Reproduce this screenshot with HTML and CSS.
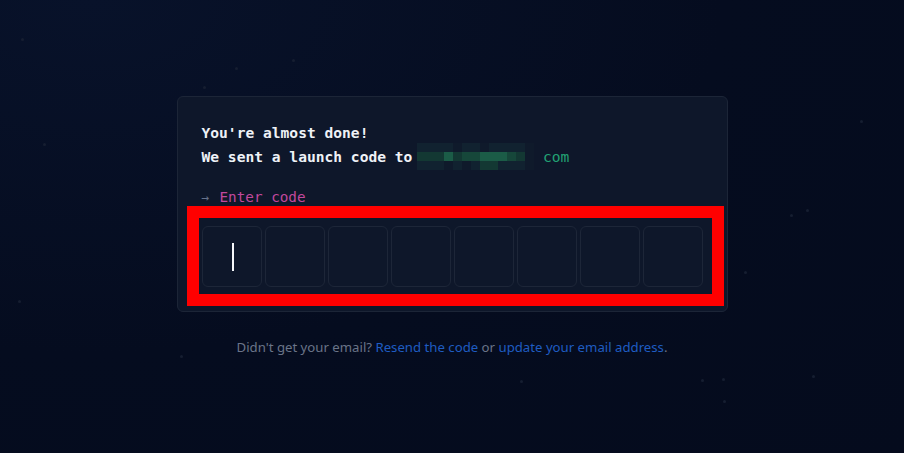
FILE: index.html
```html
<!DOCTYPE html>
<html lang="en">
<head>
<meta charset="utf-8">
<title>Launch code</title>
<link rel="stylesheet" href="styles.css">
</head>
<body>
<div class="stars">
  <span class="star" style="left:21px;top:38px"></span>
  <span class="star" style="left:292px;top:59px"></span>
  <span class="star" style="left:203px;top:86px"></span>
  <span class="star" style="left:235px;top:67px"></span>
  <span class="star" style="left:43px;top:143px"></span>
  <span class="star" style="left:790px;top:214px"></span>
  <span class="star" style="left:806px;top:209px"></span>
  <span class="star" style="left:744px;top:271px"></span>
  <span class="star" style="left:812px;top:375px"></span>
  <span class="star" style="left:722px;top:378px"></span>
  <span class="star" style="left:701px;top:379px"></span>
  <span class="star" style="left:723px;top:400px"></span>
  <span class="star" style="left:18px;top:300px"></span>
  <span class="star" style="left:180px;top:355px"></span>
  <span class="star" style="left:520px;top:380px"></span>
  <span class="star" style="left:860px;top:120px"></span>
</div>
<main class="page">
  <section class="card">
    <p class="line">You're almost done!</p>
    <p class="line">We sent a launch code to <span class="blur"><span class="grid"><span class="row"><i class="b1"></i><i class="b1"></i><i class="b1"></i><i class="b1"></i><i class="b0"></i><i class="b1"></i><i class="b1"></i><i class="b0"></i><i class="b1"></i><i class="b1"></i><i class="b1"></i><i class="b1"></i><i class="b0"></i></span><span class="row"><i class="b2"></i><i class="b2"></i><i class="b2"></i><i class="b4"></i><i class="b2"></i><i class="b3"></i><i class="b3"></i><i class="b4"></i><i class="b4"></i><i class="b4"></i><i class="b3"></i><i class="b2"></i><i class="b0"></i></span><span class="row"><i class="b1"></i><i class="b1"></i><i class="b1"></i><i class="b0"></i><i class="b1"></i><i class="b0"></i><i class="b1"></i><i class="b2"></i><i class="b2"></i><i class="b1"></i><i class="b1"></i><i class="b1"></i><i class="b0"></i></span></span></span> <span class="dom">com</span></p>
    <p class="prompt"><span class="arrow">→</span>Enter code</p>
    <div class="code-row">
      <div class="cell"><span class="caret"></span></div>
      <div class="cell"></div>
      <div class="cell"></div>
      <div class="cell"></div>
      <div class="cell"></div>
      <div class="cell"></div>
      <div class="cell"></div>
      <div class="cell"></div>
      <div class="highlight"></div>
    </div>
  </section>
  <p class="footer">Didn't get your email? <a href="#">Resend the code</a> or <a href="#">update your email address</a>.</p>
</main>
</body>
</html>
```
FILE: styles.css
```css
html, body {
  margin: 0;
  height: 100%;
}
body {
  background: radial-gradient(ellipse at 10% 0%, #08122a 0%, #050c1f 55%, #050b1d 100%);
  overflow: hidden;
  position: relative;
}
.stars {
  position: absolute;
  inset: 0;
}
.star {
  position: absolute;
  width: 3px;
  height: 3px;
  border-radius: 50%;
  background: #161e31;
}
.page {
  position: relative;
  display: flex;
  flex-direction: column;
  align-items: center;
  padding-top: 96px;
}
.card {
  width: 501px;
  padding: 24px;
  background: #0e172a;
  border: 1px solid #1c2537;
  border-radius: 6px;
}
.line {
  margin: 0;
  font-family: "DejaVu Sans Mono", monospace;
  font-size: 14.6px;
  font-weight: 700;
  line-height: 24px;
  color: #eef2f7;
  white-space: pre;
}
.blur {
  display: inline-block;
  position: relative;
  width: 117px;
  height: 14px;
  margin-left: -4px;
  vertical-align: -3px;
}
.blur .grid {
  position: absolute;
  left: 0;
  top: -8px;
  display: flex;
  flex-direction: column;
}
.blur .row {
  display: flex;
}
.blur i {
  width: 9px;
  height: 9px;
}
.b0 { background: #0f1a2b; }
.b1 { background: #112230; }
.b2 { background: #133833; }
.b3 { background: #16473a; }
.b4 { background: #1b5c47; }
.dom {
  color: #22a274;
  font-weight: 400;
}
.prompt {
  margin: 16px 0 0;
  font-family: "DejaVu Sans Mono", monospace;
  font-size: 14.3px;
  line-height: 24px;
  color: #c1489d;
  white-space: pre;
}
.arrow {
  display: inline-block;
  width: 18px;
  color: #66728a;
  font-size: 13px;
}
.code-row {
  position: relative;
  display: flex;
  gap: 3px;
  margin-top: 16px;
}
.cell {
  flex: 1;
  height: 59px;
  border: 1px solid #1d2638;
  border-radius: 6px;
  background: #0e172a;
  display: flex;
  align-items: center;
  justify-content: center;
}
.caret {
  width: 2px;
  height: 28px;
  margin-left: 2px;
  background: #f5f7fa;
}
.highlight {
  position: absolute;
  left: -15px;
  right: -21px;
  top: -20px;
  bottom: -19px;
  border: 12px solid #ff0000;
  pointer-events: none;
}
.footer {
  margin: 25px 0 0;
  font-family: "Noto Sans", sans-serif;
  font-size: 13.2px;
  line-height: 20px;
  color: #6a7488;
}
.footer a {
  color: #1f5cc2;
  text-decoration: none;
}
```
